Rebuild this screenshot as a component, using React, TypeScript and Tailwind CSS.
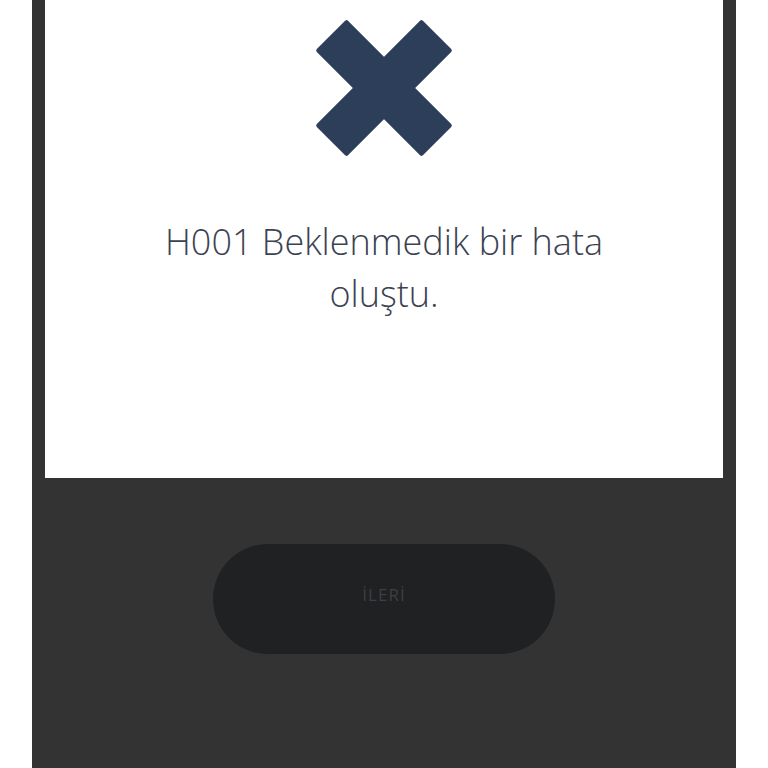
import React from 'react'

export default function App() {
  return (
    <div className="min-h-screen w-full bg-white" style={{ fontFamily: '"Open Sans", Lato, sans-serif' }}>
      <div className="mx-auto flex h-[768px] w-[704px] flex-col bg-[#333333] px-[13px]">
        <div className="flex h-[478px] flex-col items-center bg-white pt-[19px]">
          <svg width="138" height="138" viewBox="0 0 138 138" className="shrink-0">
            <g transform="translate(69 69) rotate(45)" fill="#2c3e59">
              <rect x="-75" y="-22" width="150" height="44" rx="2" />
              <rect x="-22" y="-75" width="44" height="150" rx="2" />
            </g>
          </svg>
          <p className="mt-[59px] w-[500px] text-center text-[36px] font-light leading-[52px] text-[#3b4252]">
            H001 Beklenmedik bir hata oluştu.
          </p>
        </div>
        <div className="flex justify-center pt-[66px]">
          <button className="flex h-[110px] w-[342px] items-center justify-center rounded-full bg-[#1f2123] pb-[8px] text-[17px] tracking-[0.06em] text-[#3c3f43]">
            İLERİ
          </button>
        </div>
      </div>
    </div>
  )
}
